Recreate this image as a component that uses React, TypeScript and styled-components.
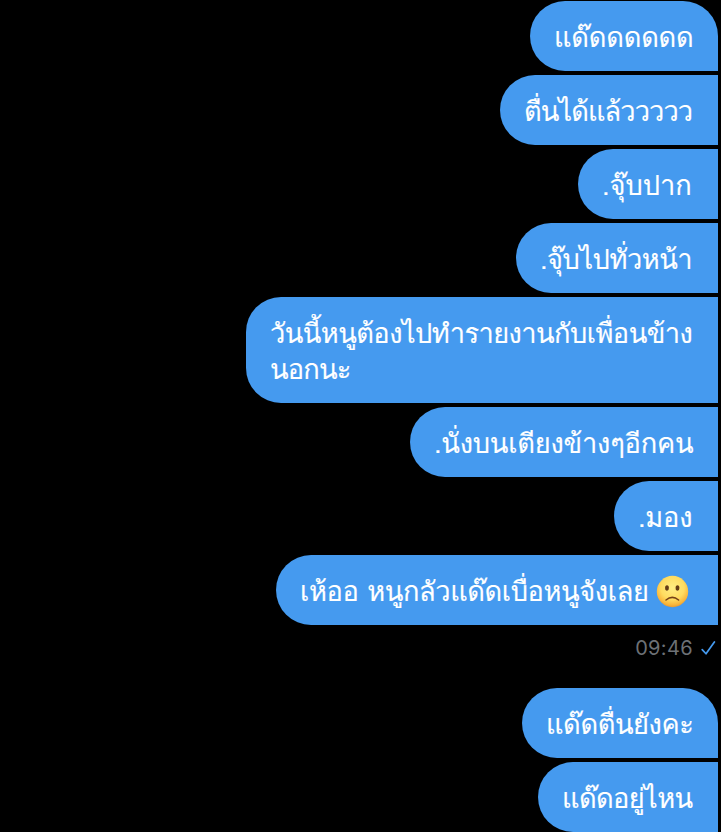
import React from 'react';
import styled, { createGlobalStyle } from 'styled-components';

const GlobalStyle = createGlobalStyle`
  * { box-sizing: border-box; }
  body { margin: 0; background: #000; overflow: hidden; }
`;

const Conversation = styled.main`
  width: 721px;
  height: 832px;
  padding: 1px 3px 0 0;
  overflow: hidden;
  background: #000;
`;

const Group = styled.section`
  display: flex;
  flex-direction: column;
  align-items: flex-end;
  gap: 4px;
`;

const Bubble = styled.div<{ $width: number; $first?: boolean }>`
  flex: none;
  width: ${(p) => p.$width}px;
  padding: 19px 0 15px 24px;
  border-radius: 35px ${(p) => (p.$first ? 35 : 0)}px 0 35px;
  background: #459aef;
`;

const Line = styled.div<{ $spacing: number }>`
  display: flex;
  align-items: center;
  height: 36px;
  color: #fff;
  font: 27.2px/36px Loma, 'Noto Sans', sans-serif;
  letter-spacing: ${(p) => p.$spacing}px;
  -webkit-text-stroke: 0.15px #fff;
  white-space: pre;
`;

const Emoji = styled.svg`
  flex: none;
  width: 33px;
  height: 33px;
  margin: 0 0 2px 7px;
`;

const Status = styled.div`
  display: flex;
  align-items: center;
  justify-content: flex-end;
  gap: 8px;
  height: 63px;
  padding: 0 2px 18px 0;
  color: #6d7176;
  font: 20px/24px Inter, sans-serif;
  letter-spacing: 0.35px;
`;

const Check = styled.svg`
  width: 15px;
  height: 16px;
`;

type Message = { width: number; lines: { text: string; spacing: number }[]; sad?: boolean };

const morning: Message[] = [
  { width: 188, lines: [{ text: 'แด๊ดดดดดด', spacing: -0.2 }] },
  { width: 218, lines: [{ text: 'ตื่นได้แล้ววววว', spacing: -0.9 }] },
  { width: 140, lines: [{ text: '.จุ๊บปาก', spacing: 0 }] },
  { width: 202, lines: [{ text: '.จุ๊บไปทั่วหน้า', spacing: -0.45 }] },
  {
    width: 472,
    lines: [
      { text: 'วันนี้หนูต้องไปทำรายงานกับเพื่อนข้าง', spacing: -0.54 },
      { text: 'นอกนะ', spacing: -0.8 },
    ],
  },
  { width: 308, lines: [{ text: '.นั่งบนเตียงข้างๆอีกคน', spacing: -0.2 }] },
  { width: 104, lines: [{ text: '.มอง', spacing: -0.2 }] },
  { width: 442, sad: true, lines: [{ text: 'เห้ออ หนูกลัวแด๊ดเบื่อหนูจังเลย', spacing: -0.38 }] },
];

const later: Message[] = [
  { width: 196, lines: [{ text: 'แด๊ดตื่นยังคะ', spacing: -0.4 }] },
  { width: 180, lines: [{ text: 'แด๊ดอยู่ไหน', spacing: -0.6 }] },
];

const SadFace = () => (
  <Emoji viewBox="0 0 33 33">
    <defs>
      <radialGradient id="face" cx="50%" cy="38%" r="62%">
        <stop offset="0" stopColor="#ffed83" />
        <stop offset=".6" stopColor="#ffdc60" />
        <stop offset=".88" stopColor="#f9b53b" />
        <stop offset="1" stopColor="#e89a30" />
      </radialGradient>
    </defs>
    <circle cx="16.5" cy="16.5" r="15.7" fill="url(#face)" />
    <ellipse cx="11" cy="13" rx="1.9" ry="2.8" fill="#653c16" />
    <ellipse cx="21.5" cy="13" rx="1.9" ry="2.8" fill="#653c16" />
    <path d="M10 25Q16.3 19.8 22.6 25" fill="none" stroke="#754017" strokeWidth="1.5" strokeLinecap="round" />
  </Emoji>
);

const Messages = ({ items }: { items: Message[] }) => (
  <Group>
    {items.map((m, i) => (
      <Bubble key={m.lines[0].text} $width={m.width} $first={i === 0}>
        {m.lines.map((line) => (
          <Line key={line.text} $spacing={line.spacing}>
            {line.text}
            {m.sad && <SadFace />}
          </Line>
        ))}
      </Bubble>
    ))}
  </Group>
);

export default function App() {
  return (
    <>
      <GlobalStyle />
      <Conversation>
        <Messages items={morning} />
        <Status>
          <span>09:46</span>
          <Check viewBox="0 0 15 16">
            <path d="M1.2 9.6L5 13.8L13.4 2" fill="none" stroke="#459aef" strokeWidth="1.7" strokeLinecap="round" strokeLinejoin="round" />
          </Check>
        </Status>
        <Messages items={later} />
      </Conversation>
    </>
  );
}
